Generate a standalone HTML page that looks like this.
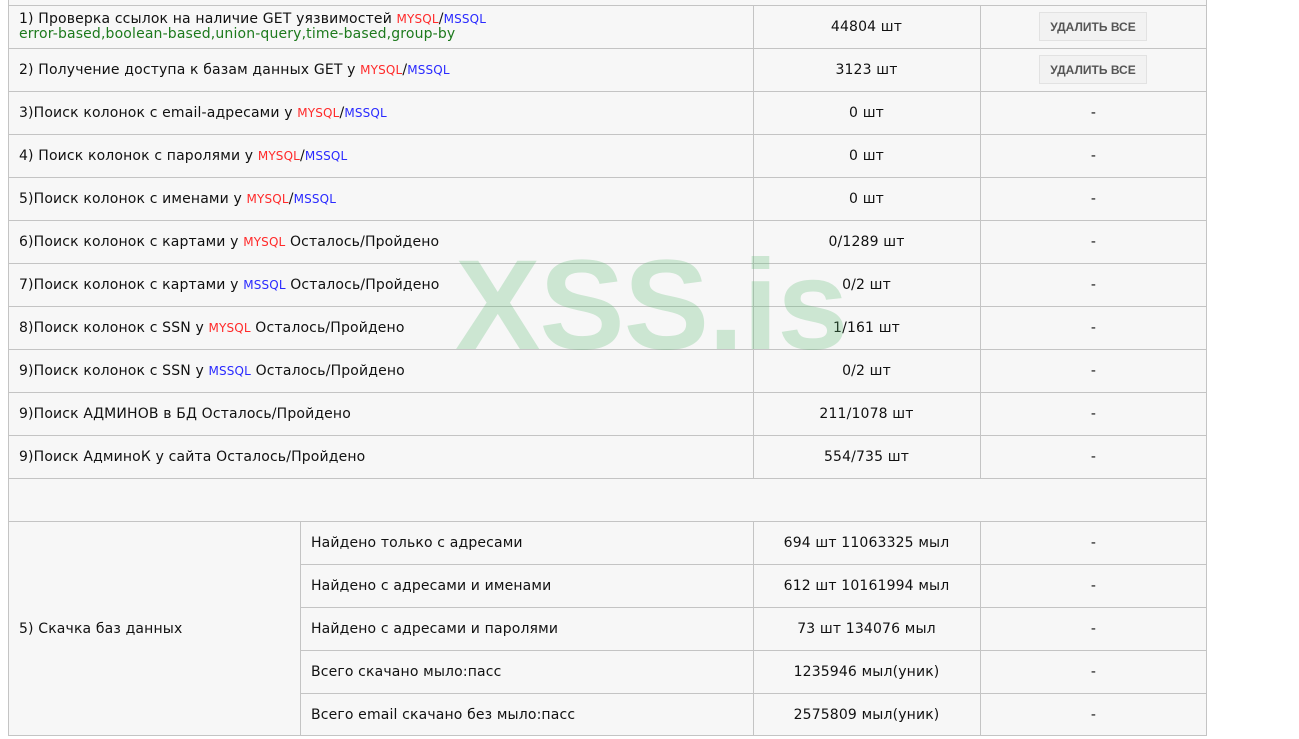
<!DOCTYPE html>
<html><head><meta charset="utf-8"><style>
body{margin:0;background:#fff;width:1299px;height:739px;overflow:hidden;position:relative;font-family:"DejaVu Sans","Liberation Sans",sans-serif;font-size:14px;letter-spacing:0.15px;color:#111}
.bg{position:absolute;left:8px;top:0;width:1199px;height:736px;background:#f7f7f7;border-left:1px solid #c4c4c4;border-right:1px solid #c4c4c4;border-bottom:1px solid #c4c4c4;box-sizing:border-box}
.h{position:absolute;height:1px;background:#c4c4c4}
.v{position:absolute;width:1px;background:#c4c4c4}
.t{position:absolute;height:43px;line-height:45px;white-space:nowrap}
.c{text-align:center}
.m{color:#ff2a2a;font-size:12px}.s{color:#2a2aff;font-size:12px}
.btn{position:absolute;left:1039px;width:108px;height:29px;background:#f2f2f2;border:1px solid #e2e2e2;box-sizing:border-box;text-align:center;line-height:28px;font-size:12px;letter-spacing:0;color:#555;font-family:"Liberation Sans",Arial,sans-serif;font-weight:bold}
.wm{position:absolute;left:455px;top:232px;font-family:"Liberation Sans",Arial,sans-serif;font-weight:bold;font-size:128px;letter-spacing:-1px;color:rgba(90,185,110,0.27)}
</style></head><body>
<div class="bg"></div>
<div class="h" style="left:8px;width:1199px;top:5px"></div>
<div class="h" style="left:8px;width:1199px;top:48px"></div>
<div class="h" style="left:8px;width:1199px;top:91px"></div>
<div class="h" style="left:8px;width:1199px;top:134px"></div>
<div class="h" style="left:8px;width:1199px;top:177px"></div>
<div class="h" style="left:8px;width:1199px;top:220px"></div>
<div class="h" style="left:8px;width:1199px;top:263px"></div>
<div class="h" style="left:8px;width:1199px;top:306px"></div>
<div class="h" style="left:8px;width:1199px;top:349px"></div>
<div class="h" style="left:8px;width:1199px;top:392px"></div>
<div class="h" style="left:8px;width:1199px;top:435px"></div>
<div class="h" style="left:8px;width:1199px;top:478px"></div>
<div class="h" style="left:8px;width:1199px;top:521px"></div>
<div class="h" style="left:300px;width:907px;top:564px"></div>
<div class="h" style="left:300px;width:907px;top:607px"></div>
<div class="h" style="left:300px;width:907px;top:650px"></div>
<div class="h" style="left:300px;width:907px;top:693px"></div>
<div class="v" style="left:753px;top:5px;height:473px"></div>
<div class="v" style="left:980px;top:5px;height:473px"></div>
<div class="v" style="left:300px;top:521px;height:215px"></div>
<div class="v" style="left:753px;top:521px;height:215px"></div>
<div class="v" style="left:980px;top:521px;height:215px"></div>

<div style="position:absolute;left:19px;top:12px;line-height:15px;white-space:nowrap">1) Проверка ссылок на наличие GET уязвимостей <span class="m">MYSQL</span>/<span class="s">MSSQL</span><br><span style="color:#1d7a1d">error-based,boolean-based,union-query,time-based,group-by</span></div>
<div class="t c" style="left:753px;width:227px;top:5px">44804 шт</div>
<div class="btn" style="top:12px">УДАЛИТЬ ВСЕ</div>

<div class="t" style="left:19px;top:48px">2) Получение доступа к базам данных GET у <span class="m">MYSQL</span>/<span class="s">MSSQL</span></div>
<div class="t c" style="left:753px;width:227px;top:48px">3123 шт</div>
<div class="btn" style="top:55px">УДАЛИТЬ ВСЕ</div>

<div class="t" style="left:19px;top:91px">3)Поиск колонок с email-адресами у <span class="m">MYSQL</span>/<span class="s">MSSQL</span></div>
<div class="t c" style="left:753px;width:227px;top:91px">0 шт</div><div class="t c" style="left:980px;width:227px;top:91px">-</div>
<div class="t" style="left:19px;top:134px">4) Поиск колонок с паролями у <span class="m">MYSQL</span>/<span class="s">MSSQL</span></div>
<div class="t c" style="left:753px;width:227px;top:134px">0 шт</div><div class="t c" style="left:980px;width:227px;top:134px">-</div>
<div class="t" style="left:19px;top:177px">5)Поиск колонок с именами у <span class="m">MYSQL</span>/<span class="s">MSSQL</span></div>
<div class="t c" style="left:753px;width:227px;top:177px">0 шт</div><div class="t c" style="left:980px;width:227px;top:177px">-</div>
<div class="t" style="left:19px;top:220px">6)Поиск колонок с картами у <span class="m">MYSQL</span> Осталось/Пройдено</div>
<div class="t c" style="left:753px;width:227px;top:220px">0/1289 шт</div><div class="t c" style="left:980px;width:227px;top:220px">-</div>
<div class="t" style="left:19px;top:263px">7)Поиск колонок с картами у <span class="s">MSSQL</span> Осталось/Пройдено</div>
<div class="t c" style="left:753px;width:227px;top:263px">0/2 шт</div><div class="t c" style="left:980px;width:227px;top:263px">-</div>
<div class="t" style="left:19px;top:306px">8)Поиск колонок с SSN у <span class="m">MYSQL</span> Осталось/Пройдено</div>
<div class="t c" style="left:753px;width:227px;top:306px">1/161 шт</div><div class="t c" style="left:980px;width:227px;top:306px">-</div>
<div class="t" style="left:19px;top:349px">9)Поиск колонок с SSN у <span class="s">MSSQL</span> Осталось/Пройдено</div>
<div class="t c" style="left:753px;width:227px;top:349px">0/2 шт</div><div class="t c" style="left:980px;width:227px;top:349px">-</div>
<div class="t" style="left:19px;top:392px">9)Поиск АДМИНОВ в БД Осталось/Пройдено</div>
<div class="t c" style="left:753px;width:227px;top:392px">211/1078 шт</div><div class="t c" style="left:980px;width:227px;top:392px">-</div>
<div class="t" style="left:19px;top:435px">9)Поиск АдминоК у сайта Осталось/Пройдено</div>
<div class="t c" style="left:753px;width:227px;top:435px">554/735 шт</div><div class="t c" style="left:980px;width:227px;top:435px">-</div>

<div class="t" style="left:19px;top:607px">5) Скачка баз данных</div>
<div class="t" style="left:311px;top:521px">Найдено только с адресами</div>
<div class="t c" style="left:753px;width:227px;top:521px">694 шт 11063325 мыл</div><div class="t c" style="left:980px;width:227px;top:521px">-</div>
<div class="t" style="left:311px;top:564px">Найдено с адресами и именами</div>
<div class="t c" style="left:753px;width:227px;top:564px">612 шт 10161994 мыл</div><div class="t c" style="left:980px;width:227px;top:564px">-</div>
<div class="t" style="left:311px;top:607px">Найдено с адресами и паролями</div>
<div class="t c" style="left:753px;width:227px;top:607px">73 шт 134076 мыл</div><div class="t c" style="left:980px;width:227px;top:607px">-</div>
<div class="t" style="left:311px;top:650px">Всего скачано мыло:пасс</div>
<div class="t c" style="left:753px;width:227px;top:650px">1235946 мыл(уник)</div><div class="t c" style="left:980px;width:227px;top:650px">-</div>
<div class="t" style="left:311px;top:693px">Всего email скачано без мыло:пасс</div>
<div class="t c" style="left:753px;width:227px;top:693px">2575809 мыл(уник)</div><div class="t c" style="left:980px;width:227px;top:693px">-</div>

<div class="wm">XSS.is</div>
</body></html>
